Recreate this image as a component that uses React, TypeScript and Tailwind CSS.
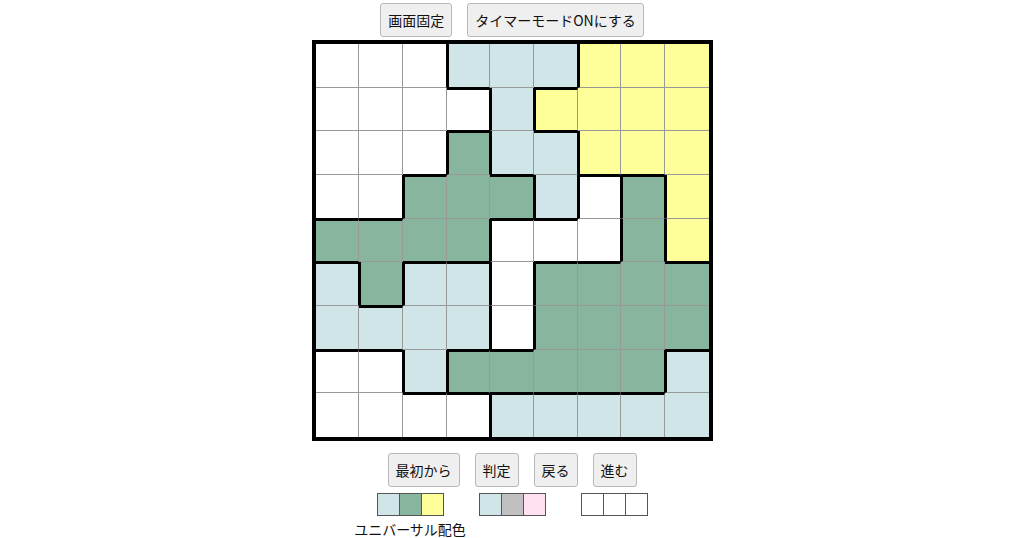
import React from "react";

const rows = [
  "WWWLLLYYY",
  "WWWWLYYYY",
  "WWWGLLYYY",
  "WWGGGLWGY",
  "GGGGWWWGY",
  "LGLLWGGGG",
  "LLLLWGGGG",
  "WWLGGGGGL",
  "WWWWLLLLL",
];

const bgFor: Record<string, string> = {
  W: "bg-white",
  L: "bg-[#cfe5e8]",
  G: "bg-[#88b59e]",
  Y: "bg-[#ffff99]",
};

function Cell({ r, c }: { r: number; c: number }) {
  const v = rows[r][c];
  const cls: string[] = ["box-border", bgFor[v]];
  if (c < 8) {
    const diff = rows[r][c + 1] !== v;
    cls.push(diff ? "border-r border-r-black" : "border-r border-r-[#999]");
  }
  if (r < 8) {
    const diff = rows[r + 1][c] !== v;
    cls.push(diff ? "border-b border-b-black" : "border-b border-b-[#999]");
  }
  if (c > 0 && rows[r][c - 1] !== v) cls.push("border-l-2 border-l-black");
  if (r > 0 && rows[r - 1][c] !== v) cls.push("border-t-2 border-t-black");
  return <div className={cls.join(" ")} />;
}

function Btn({ children }: { children: React.ReactNode }) {
  return (
    <button className="h-[34px] px-[7px] rounded-[3px] border border-[#b8b8b8] bg-[#efefef] text-[14px] leading-[20px] text-[#111] whitespace-nowrap">
      {children}
    </button>
  );
}

function Swatches({ colors }: { colors: string[] }) {
  return (
    <div className="flex border-l border-y border-[#555] h-[23px]">
      {colors.map((c, i) => (
        <div key={i} className={"w-[22px] h-full border-r border-[#555] " + c} />
      ))}
    </div>
  );
}

export default function App() {
  const cells = [];
  for (let r = 0; r < 9; r++) for (let c = 0; c < 9; c++) cells.push(<Cell key={r + "-" + c} r={r} c={c} />);
  return (
    <div
      className="w-[1024px] h-[538px] bg-white overflow-hidden flex flex-col items-center"
      style={{ fontFamily: '"Noto Sans CJK JP", "Noto Sans", sans-serif' }}
    >
      <div className="flex gap-[15px] mt-[3px]">
        <Btn>画面固定</Btn>
        <Btn>タイマーモードONにする</Btn>
      </div>
      <div className="mt-[3px] border-4 border-black">
        <div className="w-[393px] h-[393px] grid grid-cols-9 grid-rows-9">{cells}</div>
      </div>
      <div className="flex gap-[15px] mt-[12px]">
        <Btn>最初から</Btn>
        <Btn>判定</Btn>
        <Btn>戻る</Btn>
        <Btn>進む</Btn>
      </div>
      <div className="flex gap-[35px] mt-[6px] items-start">
        <div className="w-[67px] flex flex-col items-center">
          <Swatches colors={["bg-[#cfe5e8]", "bg-[#88b59e]", "bg-[#ffff99]"]} />
          <div className="mt-[3px] text-[14px] leading-[20px] text-[#111] whitespace-nowrap">ユニバーサル配色</div>
        </div>
        <div className="w-[67px] flex flex-col items-center">
          <Swatches colors={["bg-[#cfe5e8]", "bg-[#c0c0c0]", "bg-[#ffe0f0]"]} />
        </div>
        <div className="w-[67px] flex flex-col items-center">
          <Swatches colors={["bg-white", "bg-white", "bg-white"]} />
        </div>
      </div>
    </div>
  );
}
